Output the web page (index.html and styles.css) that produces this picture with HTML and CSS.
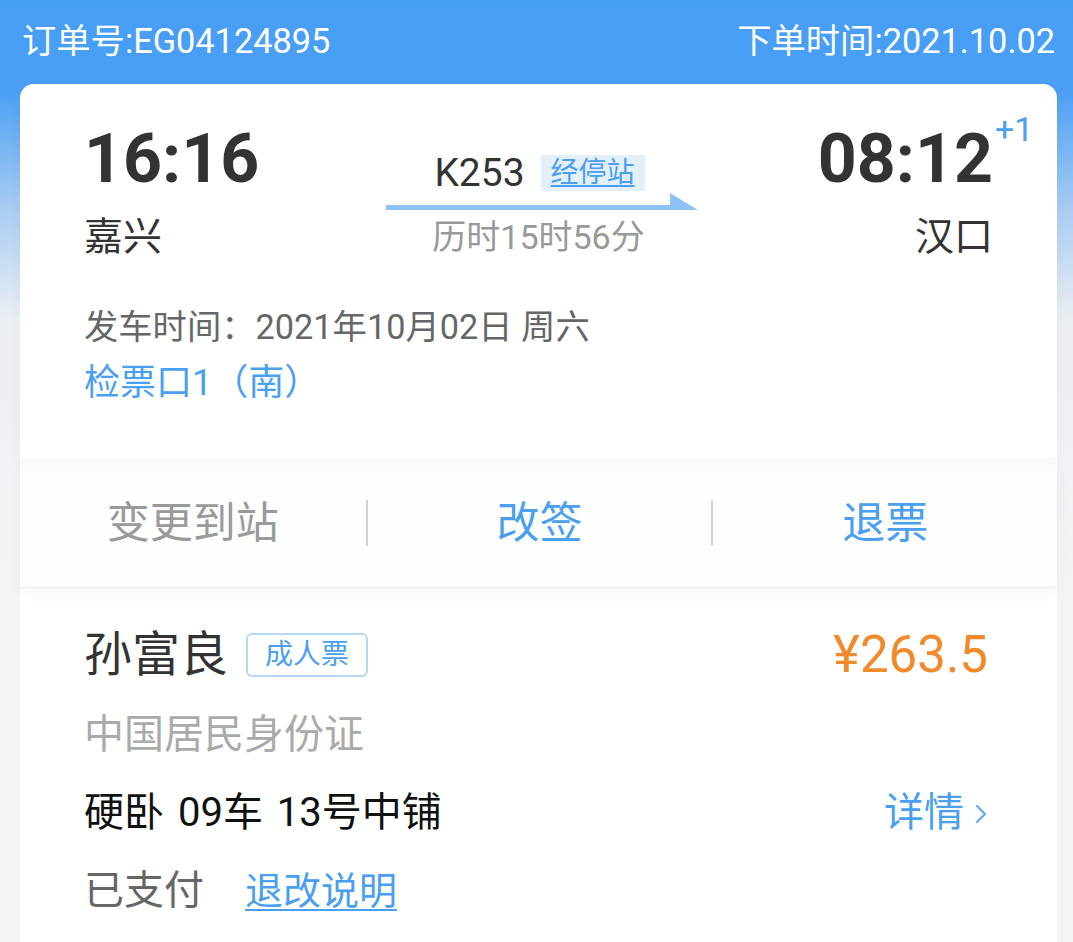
FILE: index.html
```html
<!DOCTYPE html>
<html lang="zh">
<head>
<meta charset="utf-8">
<title>订单详情</title>
<link rel="stylesheet" href="styles.css">
</head>
<body>
<header class="header">
  <span>订单号:EG04124895</span>
  <span>下单时间:2021.10.02</span>
</header>

<section class="card-main">
  <div class="route">
    <div class="station">
      <div class="time">16:16</div>
      <div class="city">嘉兴</div>
    </div>
    <div class="train">
      <div class="train-no">
        <span class="code">K253</span>
        <a class="stops">经停站</a>
      </div>
      <svg class="arrow" width="312" height="18" viewBox="0 0 312 18">
        <rect x="0" y="12" width="300" height="5" fill="#8cc3f4"/>
        <polygon points="284,0 312,17 284,17" fill="#8cc3f4"/>
      </svg>
      <div class="duration">历时15时56分</div>
    </div>
    <div class="station station-end">
      <div class="time"><span class="time-val">08:12<sup class="plus">+1</sup></span></div>
      <div class="city">汉口</div>
    </div>
  </div>
  <div class="depart">发车时间：2021年10月02日 周六</div>
  <div class="gate">检票口1（南）</div>
</section>

<nav class="actions">
  <div class="action action-muted">变更到站</div>
  <div class="action action-link">改签</div>
  <div class="action action-link">退票</div>
</nav>

<section class="card-passenger">
  <div class="p-row">
    <div class="p-name">
      <span class="name">孙富良</span>
      <span class="tag">成人票</span>
    </div>
    <span class="price">¥263.5</span>
  </div>
  <div class="p-id">中国居民身份证</div>
  <div class="p-seat">
    <span class="seat">硬卧 09车 13号中铺</span>
    <a class="detail">详情
      <svg class="chev" width="14" height="24" viewBox="0 0 14 24"><path d="M3 4 L11 12 L3 20" fill="none" stroke="#6aaef0" stroke-width="2.4" stroke-linecap="round" stroke-linejoin="round"/></svg>
    </a>
  </div>
  <div class="p-pay">
    <span class="paid">已支付</span>
    <a class="rules">退改说明</a>
  </div>
</section>
</body>
</html>
```

FILE: styles.css
```css
* { box-sizing: border-box; }

html, body {
  margin: 0;
  padding: 0;
}

body {
  width: 1073px;
  min-height: 942px;
  font-family: Roboto, "Noto Sans CJK SC", sans-serif;
  color: #333;
  background: linear-gradient(180deg, #479ef5 0px, #4a9ff4 90px, #a9cdf2 210px, #eceff3 320px, #f3f4f6 600px, #f3f4f6 100%);
  overflow: hidden;
}

a { cursor: pointer; }

.header {
  height: 84px;
  display: flex;
  justify-content: space-between;
  align-items: center;
  padding: 0 18px 2px 22px;
  color: #fff;
  font-size: 34.3px;
  line-height: 40px;
}

.card-main {
  margin: 0 16px 0 20px;
  background: #fff;
  border-radius: 14px 14px 0 0;
  padding: 40px 64px 47px 64px;
  position: relative;
  z-index: 3;
  box-shadow: 0 8px 14px rgba(0, 0, 0, 0.03);
}

.route {
  display: grid;
  grid-template-columns: 1fr auto 1fr;
}

.time {
  font-size: 68px;
  line-height: 70px;
  font-weight: 700;
  color: #333;
}

.city {
  font-size: 39px;
  line-height: 48px;
  margin-top: 19px;
  color: #333;
}

.station-end {
  text-align: right;
}

.time-val {
  position: relative;
  display: inline-block;
}

.plus {
  position: absolute;
  left: 100%;
  top: -12px;
  margin-left: 2px;
  font-size: 34px;
  line-height: 34px;
  font-weight: 400;
  color: #4a9ff0;
  vertical-align: baseline;
}

.train {
  width: 312px;
  display: flex;
  flex-direction: column;
  align-items: center;
  padding-top: 29px;
}

.train-no {
  display: flex;
  align-items: center;
  height: 40px;
  margin-left: 2px;
}

.code {
  font-size: 39px;
  line-height: 40px;
  color: #333;
}

.stops {
  margin-left: 16px;
  height: 36px;
  padding: 0 10px;
  background: #e3effb;
  color: #4a9ff0;
  font-size: 28px;
  line-height: 36px;
  text-decoration: underline;
  text-underline-offset: 3px;
  text-decoration-thickness: 2px;
}

.arrow {
  display: block;
  margin-left: 6px;
}

.duration {
  margin-top: 6px;
  font-size: 34px;
  line-height: 40px;
  color: #999;
}

.depart {
  margin-top: 38px;
  font-size: 34.3px;
  line-height: 56px;
  color: #666;
}

.gate {
  font-size: 36px;
  line-height: 56px;
  color: #4a9ff0;
}

.actions {
  margin: 0 16px 0 20px;
  height: 129px;
  background: #fefefe;
  display: grid;
  grid-template-columns: 1fr 1fr 1fr;
  align-items: center;
  position: relative;
  z-index: 2;
  box-shadow: 0 8px 14px rgba(0, 0, 0, 0.03);
}

.action {
  text-align: center;
  font-size: 43px;
  line-height: 46px;
  border-left: 2px solid #d2d2d2;
}

.action:first-child {
  border-left: none;
}

.action-muted { color: #9a9a9a; }
.action-link { color: #4a9ff0; }

.card-passenger {
  margin: 1px 16px 0 20px;
  background: #fff;
  padding: 32px 69px 20px 64px;
  min-height: 360px;
  position: relative;
  z-index: 1;
}

.p-row {
  display: flex;
  justify-content: space-between;
  align-items: center;
  height: 70px;
  margin-bottom: 6px;
}

.p-name {
  display: flex;
  align-items: center;
}

.name {
  font-size: 48px;
  line-height: 60px;
  color: #333;
}

.tag {
  margin-left: 18px;
  height: 44px;
  padding: 0 17px;
  border: 2px solid #b7d7f3;
  border-radius: 6px;
  color: #4a9ff0;
  font-size: 28px;
  line-height: 40px;
}

.price {
  font-size: 51px;
  line-height: 60px;
  color: #f08a2b;
}

.p-id {
  font-size: 40px;
  line-height: 78px;
  color: #aaa;
}

.p-seat {
  display: flex;
  justify-content: space-between;
  align-items: center;
  height: 78px;
}

.seat {
  font-size: 40px;
  line-height: 48px;
  color: #111;
  word-spacing: 4px;
}

.detail {
  display: flex;
  align-items: center;
  font-size: 40px;
  line-height: 48px;
  color: #4a9ff0;
}

.chev {
  margin-left: 10px;
  margin-top: 2px;
}

.p-pay {
  display: flex;
  align-items: center;
  height: 78px;
}

.paid {
  font-size: 40px;
  line-height: 48px;
  color: #666;
}

.rules {
  margin-left: 41px;
  font-size: 38px;
  line-height: 48px;
  color: #4a9ff0;
  text-decoration: underline;
  text-underline-offset: 5px;
  text-decoration-thickness: 2px;
}
```
